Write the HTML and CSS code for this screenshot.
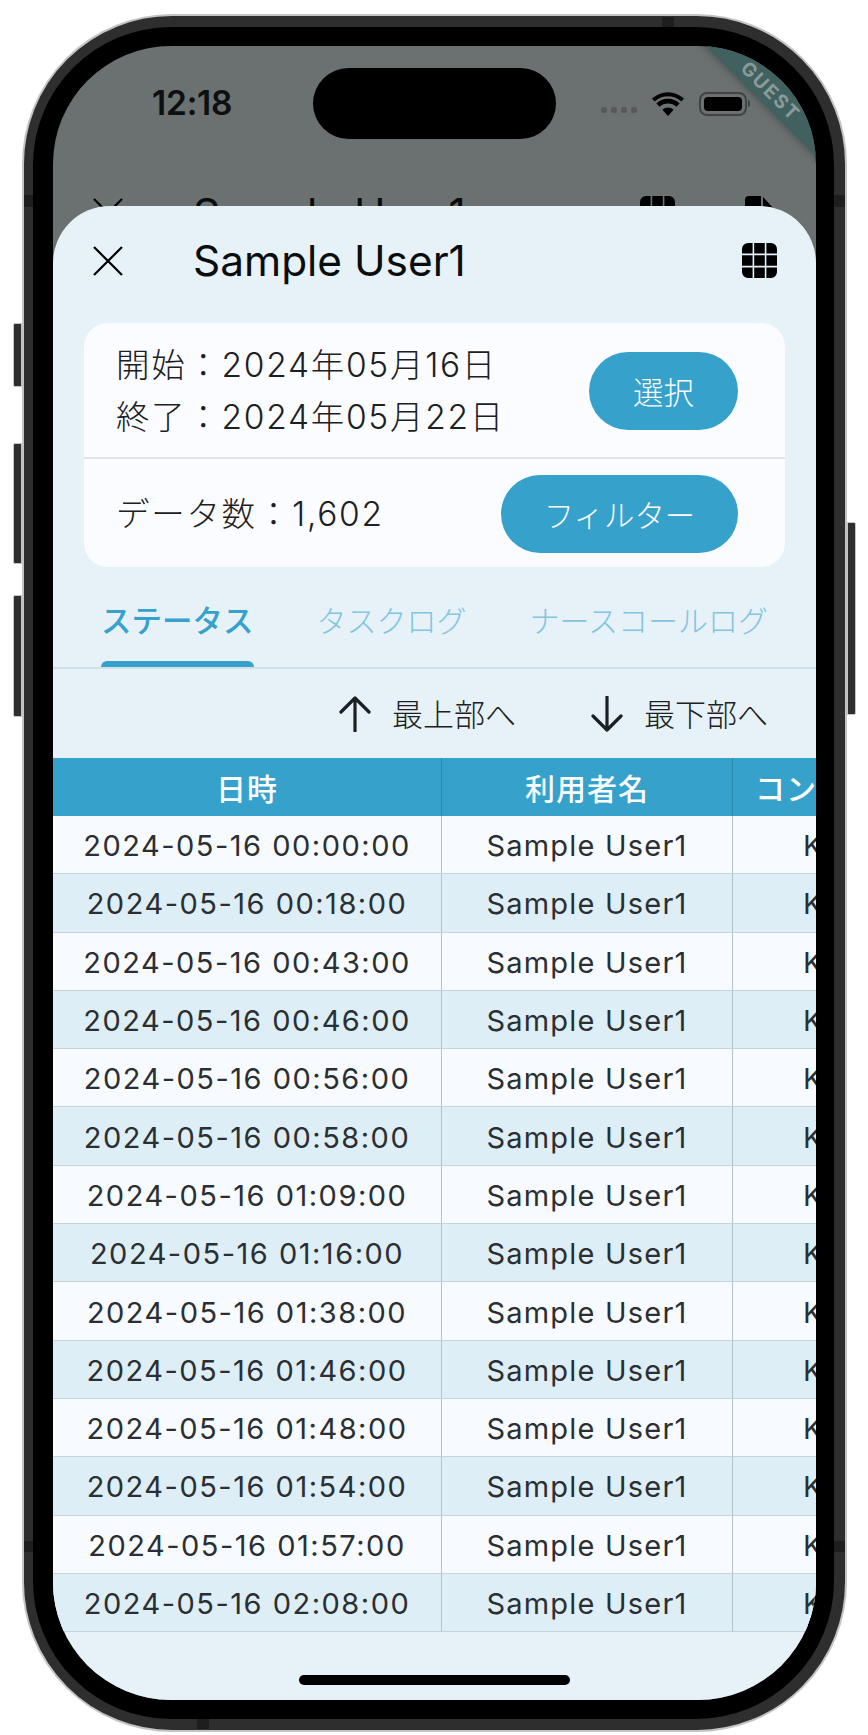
FILE: index.html
```html
<!DOCTYPE html>
<html lang="ja">
<head>
<meta charset="utf-8">
<title>Sample User1</title>
<link rel="stylesheet" href="styles.css">
</head>
<body>
<div class="device">
  <span class="side-btn side-l1"></span>
  <span class="side-btn side-l2"></span>
  <span class="side-btn side-l3"></span>
  <span class="side-btn side-r1"></span>
  <span class="band band-top"></span>
  <span class="band band-bottom"></span>
  <span class="band band-l1"></span>
  <span class="band band-r1"></span>
  <span class="band band-l2"></span>
  <span class="band band-r2"></span>
  <div class="bezel">
    <div class="screen">
      <div class="status">
        <span class="clock">12:18</span>
        <span class="island"></span>
        <span class="dots"><i></i><i></i><i></i><i></i></span>
        <svg class="wifi" viewBox="0 0 32 24"><path d="M16 24l-5.6-6.2a8 8 0 0 1 11.2 0zM7.6 14.8L4.4 11.4a17 17 0 0 1 23.2 0l-3.2 3.4a12.4 12.4 0 0 0-16.8 0zM2.6 9.4L0 6.6a23.6 23.6 0 0 1 32 0l-2.6 2.8a20 20 0 0 0-26.8 0z" fill="#000"/></svg>
        <span class="battery"><span class="battery-fill"></span></span>
        <span class="battery-nub"></span>
      </div>
      <div class="ribbon"><span>GUEST</span></div>
      <div class="behind">
        <svg class="ico-x" viewBox="0 0 30 30"><path d="M1 1l28 28M29 1L1 29" stroke="#000" stroke-width="2.2" fill="none"/></svg>
        <span class="title">Sample User1</span>
        <svg class="ico-grid behind-grid" viewBox="0 0 35 35"><use href="#grid"/></svg>
        <svg class="ico-doc" viewBox="0 0 30 35"><path d="M4 0h12v35H4a4 4 0 0 1-4-4V4a4 4 0 0 1 4-4zM18 1l12 13H18z" fill="#000"/></svg>
      </div>
      <div class="sheet">
        <header class="sheet-head">
          <svg class="ico-x" viewBox="0 0 30 30"><path d="M1 1l28 28M29 1L1 29" stroke="#000" stroke-width="2.2" fill="none"/></svg>
          <span class="title">Sample User1</span>
          <svg class="ico-grid" viewBox="0 0 35 35"><defs><g id="grid"><path d="M6 0h4.6v10.6H0V6a6 6 0 0 1 6-6zM12.2 0h10.6v10.6H12.2zM24.4 0H29a6 6 0 0 1 6 6v4.6H24.4zM0 12.2h10.6v10.6H0zM12.2 12.2h10.6v10.6H12.2zM24.4 12.2H35v10.6H24.4zM0 24.4h10.6V35H6a6 6 0 0 1-6-6zM12.2 24.4h10.6V35H12.2zM24.4 24.4H35V29a6 6 0 0 1-6 6h-4.6z" fill="#000"/></g></defs><use href="#grid"/></svg>
        </header>
        <section class="card">
          <div class="card-row card-row-top">
            <div class="dates">
              <div>開始：2024年05月16日</div>
              <div>終了：2024年05月22日</div>
            </div>
            <button class="pill pill-short">選択</button>
          </div>
          <div class="card-row card-row-bottom">
            <div class="count">データ数：1,602</div>
            <button class="pill pill-long">フィルター</button>
          </div>
        </section>
        <nav class="tabs">
          <span class="tab tab-active">ステータス</span>
          <span class="tab">タスクログ</span>
          <span class="tab">ナースコールログ</span>
        </nav>
        <div class="jump">
          <span class="jump-item">
            <svg class="ico-arrow" viewBox="0 0 32 36"><path d="M16 35V2M2 16L16 2l14 14" fill="none" stroke="#1c2023" stroke-width="3.2" stroke-linecap="round" stroke-linejoin="round"/></svg>
            最上部へ
          </span>
          <span class="jump-item">
            <svg class="ico-arrow" viewBox="0 0 32 36"><path d="M16 1v33M2 20l14 14 14-14" fill="none" stroke="#1c2023" stroke-width="3.2" stroke-linecap="round" stroke-linejoin="round"/></svg>
            最下部へ
          </span>
        </div>
        <div class="table">
          <div class="row row-head"><div class="c1">日時</div><div class="c2">利用者名</div><div class="c3">コン</div></div>
          <div class="row"><div class="c1">2024-05-16 00:00:00</div><div class="c2">Sample User1</div><div class="c3">K</div></div>
          <div class="row"><div class="c1">2024-05-16 00:18:00</div><div class="c2">Sample User1</div><div class="c3">K</div></div>
          <div class="row"><div class="c1">2024-05-16 00:43:00</div><div class="c2">Sample User1</div><div class="c3">K</div></div>
          <div class="row"><div class="c1">2024-05-16 00:46:00</div><div class="c2">Sample User1</div><div class="c3">K</div></div>
          <div class="row"><div class="c1">2024-05-16 00:56:00</div><div class="c2">Sample User1</div><div class="c3">K</div></div>
          <div class="row"><div class="c1">2024-05-16 00:58:00</div><div class="c2">Sample User1</div><div class="c3">K</div></div>
          <div class="row"><div class="c1">2024-05-16 01:09:00</div><div class="c2">Sample User1</div><div class="c3">K</div></div>
          <div class="row"><div class="c1">2024-05-16 01:16:00</div><div class="c2">Sample User1</div><div class="c3">K</div></div>
          <div class="row"><div class="c1">2024-05-16 01:38:00</div><div class="c2">Sample User1</div><div class="c3">K</div></div>
          <div class="row"><div class="c1">2024-05-16 01:46:00</div><div class="c2">Sample User1</div><div class="c3">K</div></div>
          <div class="row"><div class="c1">2024-05-16 01:48:00</div><div class="c2">Sample User1</div><div class="c3">K</div></div>
          <div class="row"><div class="c1">2024-05-16 01:54:00</div><div class="c2">Sample User1</div><div class="c3">K</div></div>
          <div class="row"><div class="c1">2024-05-16 01:57:00</div><div class="c2">Sample User1</div><div class="c3">K</div></div>
          <div class="row"><div class="c1">2024-05-16 02:08:00</div><div class="c2">Sample User1</div><div class="c3">K</div></div>
        </div>
        <span class="home-bar"></span>
      </div>
    </div>
  </div>
</div>
</body>
</html>
```
FILE: styles.css
```css
* { box-sizing: border-box; }
html, body { margin: 0; padding: 0; background: #fff; }
body {
  width: 868px; height: 1735px; overflow: hidden;
  padding: 14px 0 0 22px;
  font-family: Inter, "Noto Sans CJK JP", sans-serif;
  color: #1c2023;
}
.device {
  position: relative;
  width: 825px; height: 1718px;
  padding: 11px 11px 11px 9px;
  border: 2px solid #c4c4c4;
  border-radius: 150px;
  background: #2e2e2e;
}
.side-btn {
  position: absolute;
  width: 9px;
  background: #2e2e2e;
  border: 1px solid #c4c4c4;
}
.side-l1 { left: -11px; top: 307px; height: 64px; border-radius: 2px 0 0 2px; }
.side-l2 { left: -11px; top: 427px; height: 121px; border-radius: 2px 0 0 2px; }
.side-l3 { left: -11px; top: 579px; height: 122px; border-radius: 2px 0 0 2px; }
.side-r1 { right: -11px; top: 506px; height: 193px; border-radius: 0 2px 2px 0; }
.band { position: absolute; background: #1e1e1e; }
.band-top { left: 638px; top: 1px; width: 12px; height: 10px; }
.band-bottom { left: 173px; bottom: 1px; width: 12px; height: 10px; }
.band-l1 { left: 0; top: 179px; width: 9px; height: 12px; }
.band-r1 { right: 0; top: 179px; width: 11px; height: 12px; }
.band-l2 { left: 0; top: 1525px; width: 9px; height: 11px; }
.band-r2 { right: 0; top: 1525px; width: 11px; height: 11px; }
.bezel {
  position: relative;
  height: 100%;
  padding: 19px 18px 19px 20px;
  border-radius: 138px;
  background: #000;
}
.screen {
  position: relative;
  height: 100%;
  overflow: hidden;
  border-radius: 118px;
  background: #6b7071;
}
.status {
  display: flex;
  align-items: center;
  height: 93px;
  padding: 22px 0 0 99px;
}
.clock { flex: none; width: 161px; font-size: 33.5px; font-weight: 600; color: #0d0f10; line-height: 69px; letter-spacing: -.2px; }
.island { flex: none; width: 243px; height: 71px; border-radius: 36px; background: #000; }
.dots { display: flex; flex: none; gap: 4px; margin: 13px 0 0 45px; }
.dots i { width: 6px; height: 6px; border-radius: 2px; background: #565a5b; }
.wifi { flex: none; width: 32px; height: 24px; margin: 0 0 0 15px; }
.battery {
  display: flex;
  flex: none;
  width: 48px; height: 24px;
  margin-left: 15px;
  padding: 3px;
  border: 2px solid #3f4344;
  border-radius: 8px;
}
.battery-fill { flex: 1; border-radius: 4px; background: #000; }
.battery-nub { flex: none; width: 2px; height: 7px; margin-left: 1px; border-radius: 0 2px 2px 0; background: #3f4344; }
.ribbon {
  position: absolute;
  top: 31px; right: -105px;
  width: 300px; height: 28px;
  display: flex; align-items: center; justify-content: center;
  transform: rotate(45deg);
  background: #40615f;
  box-shadow: 0 2px 6px rgba(0,0,0,.25);
}
.ribbon span { font-size: 19px; font-weight: 700; letter-spacing: 2px; color: #8b9a99; }
.behind {
  display: flex;
  align-items: center;
  height: 60px;
  margin-top: 41px;
  padding: 6px 41px 0 40px;
}
.behind .title { margin-left: 70px; }
.behind-grid { margin-left: auto; margin-right: 70px; width: 35px; height: 35px; }
.ico-doc { flex: none; width: 30px; height: 35px; }
.ico-x { width: 30px; height: 30px; flex: none; }
.ico-grid { width: 35px; height: 35px; flex: none; }
.title { font-size: 42.4px; font-weight: 400; color: #0a0c0d; white-space: nowrap; }
.sheet {
  position: absolute;
  left: 0; right: 0; top: 160px; bottom: 0;
  display: flex;
  flex-direction: column;
  border-radius: 57px 57px 0 0;
  background: #e7f2f8;
}
.sheet-head {
  display: flex;
  align-items: center;
  height: 117px;
  padding: 0 39px 8px 40px;
}
.sheet-head .title { margin-left: 70px; }
.sheet-head .ico-grid { margin-left: auto; }
.card {
  margin: 0 31px;
  height: 244px;
  border-radius: 24px;
  background: #fbfcff;
}
.card-row { display: flex; align-items: center; justify-content: space-between; padding: 2px 47px 0 32px; }
.card-row-top { height: 136px; border-bottom: 2px solid #e2e5e8; }
.card-row-bottom { height: 108px; }
.dates { margin-top: 0; font-size: 33.5px; font-weight: 300; line-height: 52px; letter-spacing: 1.7px; }
.count { margin-top: -5px; font-size: 33.5px; font-weight: 300; letter-spacing: 1.7px; }
.pill {
  height: 78px;
  padding: 0;
  border: 0;
  border-radius: 39px;
  background: #36a1ca;
  color: #fbfcff;
  font: 300 30.4px Inter, "Noto Sans CJK JP", sans-serif;
}
.pill-short { width: 149px; }
.pill-long { width: 237px; }
.tabs {
  display: flex;
  height: 102px;
  padding: 0 48px;
  justify-content: space-between;
  border-bottom: 2px solid #d3e0e8;
}
.tab {
  position: relative;
  padding-top: 30px;
  font-size: 30px;
  font-weight: 300;
  color: #82c5e1;
  white-space: nowrap;
}
.tab-active { font-size: 30.5px; font-weight: 500; color: #36a1ca; }
.tab-active::after {
  content: "";
  position: absolute;
  left: 0; right: 0; bottom: 0;
  height: 6px;
  border-radius: 6px 6px 0 0;
  background: #36a1ca;
}
.jump {
  display: flex;
  justify-content: flex-end;
  align-items: center;
  gap: 75px;
  height: 89px;
  padding-right: 48px;
}
.jump-item { display: flex; align-items: center; gap: 21px; padding-bottom: 2px; font-size: 31px; font-weight: 300; }
.ico-arrow { width: 32px; height: 36px; margin-top: 2px; }
.table { height: 874px; overflow: hidden; }
.row {
  display: grid;
  grid-template-columns: 388px 292px 83px;
  height: 58.3px;
  padding-top: 2px;
  border-bottom: 1.5px solid #c6d3da;
  background: #ddeef6;
  color: #2b2f33;
  font-size: 29px;
  font-weight: 400;
  letter-spacing: 1.5px;
}
.row:nth-child(even) { background: #f7fbff; }
.row > div {
  display: flex; align-items: center; justify-content: center;
  white-space: nowrap; overflow: hidden;
}
.row > .c2 {
  margin-top: -2px;
  padding-top: 2px;
  letter-spacing: 1.2px;
  border-left: 1.5px solid #b4c1c8;
  border-right: 1.5px solid #b4c1c8;
}
.row > .c3 { justify-content: flex-start; padding-left: 70px; }
.row-head {
  height: 58px;
  padding-top: 0;
  background: #36a1ca;
  color: #fbfdff;
  font-weight: 500;
  font-size: 30px;
  letter-spacing: 1px;
  border-bottom: 0;
}
.row-head > .c2 { margin-top: 0; padding-top: 0; letter-spacing: 1px; border-color: #2e88ab; }
.row-head > .c3 { padding-left: 22px; }
.home-bar {
  position: absolute;
  left: 246px; bottom: 15px;
  width: 271px; height: 10px;
  border-radius: 5px;
  background: #000;
}
```
